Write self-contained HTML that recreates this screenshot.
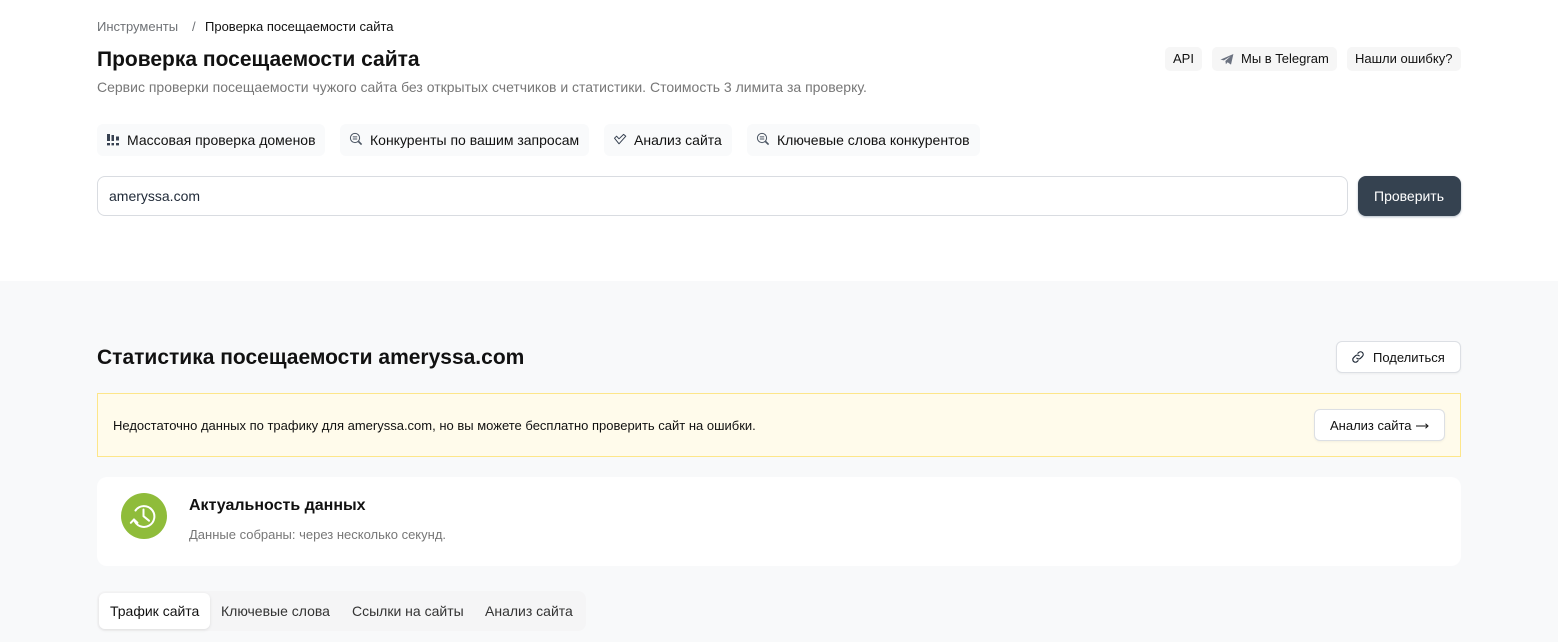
<!DOCTYPE html>
<html lang="ru">
<head>
<meta charset="utf-8">
<title>Проверка посещаемости сайта</title>
<style>
*{box-sizing:border-box}
html,body{margin:0;padding:0}
body{width:1558px;height:642px;position:relative;overflow:hidden;background:#fff;font-family:"Liberation Sans",sans-serif;color:#111;font-size:14px}
.a{position:absolute;white-space:nowrap}
.box{position:absolute;white-space:nowrap}
svg{position:absolute;display:block}
.chip{background:#f9fafb;border-radius:6px;height:32px;top:124px}
.top{background:#f6f6f6;border-radius:5px;height:24px;top:47px}
.btn{background:#fff;border:1px solid #dcdfe4;border-radius:6px;box-shadow:0 1px 2px rgba(0,0,0,.05)}
.t{line-height:20px}
.s{font-size:13px;line-height:20px}
</style>
</head>
<body>
<div class="box" style="left:0;top:281px;width:1558px;height:361px;background:#f8f9fa"></div>

<div class="a s" style="left:97px;top:17px;color:#6f7276">Инструменты</div>
<div class="a s" style="left:192px;top:17px;color:#6f7276">/</div>
<div class="a s" style="left:205px;top:17px;color:#111">Проверка посещаемости сайта</div>

<div class="a" style="left:97px;top:46px;font-size:21px;line-height:28px;font-weight:700;color:#111">Проверка посещаемости сайта</div>
<div class="a" style="left:97px;top:77px;font-size:14px;line-height:20px;color:#777">Сервис проверки посещаемости чужого сайта без открытых счетчиков и статистики. Стоимость 3 лимита за проверку.</div>

<div class="box top" style="left:1165px;width:37px"></div>
<div class="a s" style="left:1173px;top:49px">API</div>
<div class="box top" style="left:1212px;width:125px"></div>
<svg style="left:1220px;top:52px" width="14" height="14" viewBox="0 0 14 14"><path d="M.5 7.6 13.4 2 11 12.6 7.6 10.2 5.9 12.3 5.4 9 10.6 4.2 3.9 8.4Z" fill="#6b7280"/></svg>
<div class="a s" style="left:1241px;top:49px">Мы в Telegram</div>
<div class="box top" style="left:1347px;width:114px"></div>
<div class="a s" style="left:1355px;top:49px">Нашли ошибку?</div>

<div class="box chip" style="left:97px;width:228px"></div>
<svg style="left:106px;top:133px" width="14" height="14" viewBox="0 0 14 14" fill="#374151"><rect x="1" y="1" width="3" height="7"/><rect x="5.5" y="2" width="2.5" height="6"/><rect x="10" y="3.5" width="3" height="4"/><rect x="1" y="10" width="3" height="2.4"/><rect x="5.5" y="10" width="2.5" height="2.4"/><rect x="10" y="10" width="3" height="2.4"/></svg>
<div class="a t" style="left:127px;top:130px">Массовая проверка доменов</div>

<div class="box chip" style="left:340px;width:249px"></div>
<svg style="left:349px;top:132px" width="14" height="14" viewBox="0 0 14 14" fill="none" stroke="#4b5563" stroke-width="1"><circle cx="6" cy="6" r="4.6"/><path d="M3.8 4.9h4.4M3.8 7h4.4" stroke-width="1"/><path d="M9.5 9.5 12.6 12.6" stroke-width="1.6"/></svg>
<div class="a t" style="left:370px;top:130px">Конкуренты по вашим запросам</div>

<div class="box chip" style="left:604px;width:128px"></div>
<svg style="left:613px;top:132px" width="14" height="14" viewBox="0 0 14 14" fill="none" stroke="#374151" stroke-width="1"><path d="M1.5 6.2 3.6 4.2 6 6.8 10.6 2.4 12.8 4.2 6 11.8Z" stroke-linejoin="round"/></svg>
<div class="a t" style="left:634px;top:130px">Анализ сайта</div>

<div class="box chip" style="left:747px;width:233px"></div>
<svg style="left:756px;top:132px" width="14" height="14" viewBox="0 0 14 14" fill="none" stroke="#4b5563" stroke-width="1"><circle cx="6" cy="6" r="4.6"/><path d="M3.8 4.9h4.4M3.8 7h4.4" stroke-width="1"/><path d="M9.5 9.5 12.6 12.6" stroke-width="1.6"/></svg>
<div class="a t" style="left:777px;top:130px">Ключевые слова конкурентов</div>

<div class="box" style="left:97px;top:176px;width:1251px;height:40px;border:1px solid #d9dce1;border-radius:8px;background:#fff"></div>
<div class="a t" style="left:109px;top:186px;color:#1f2937">ameryssa.com</div>
<div class="box" style="left:1358px;top:176px;width:103px;height:40px;background:#354250;border-radius:8px;box-shadow:0 1px 2px rgba(31,60,90,.35)"></div>
<div class="a t" style="left:1374px;top:186px;color:#fff">Проверить</div>

<div class="a" style="left:97px;top:344px;font-size:21px;line-height:28px;font-weight:700;color:#111">Статистика посещаемости ameryssa.com</div>
<div class="box btn" style="left:1336px;top:341px;width:125px;height:32px"></div>
<svg style="left:1351px;top:350px" width="14" height="14" viewBox="0 0 24 24" fill="none" stroke="#1f2937" stroke-width="2" stroke-linecap="round" stroke-linejoin="round"><path d="M10 14a4.5 4.5 0 0 0 6.4 0l3.2-3.2a4.5 4.5 0 0 0-6.4-6.4l-1.4 1.4"/><path d="M14 10a4.5 4.5 0 0 0-6.4 0l-3.2 3.2a4.5 4.5 0 0 0 6.4 6.4l1.4-1.4"/></svg>
<div class="a s" style="left:1373px;top:348px">Поделиться</div>

<div class="box" style="left:97px;top:393px;width:1364px;height:64px;background:#fffbeb;border:1px solid #fde68a"></div>
<div class="a s" style="left:113px;top:416px">Недостаточно данных по трафику для ameryssa.com, но вы можете бесплатно проверить сайт на ошибки.</div>
<div class="box btn" style="left:1314px;top:409px;width:131px;height:32px"></div>
<div class="a s" style="left:1330px;top:416px">Анализ сайта</div>
<svg style="left:1416px;top:421px" width="13" height="10" viewBox="0 0 13 10" fill="none" stroke="#111" stroke-width="1"><path d="M0 5H12M9.5 2.8 12 5 9.5 7.2"/></svg>

<div class="box" style="left:97px;top:477px;width:1364px;height:89px;background:#fff;border-radius:10px"></div>
<svg style="left:120.5px;top:493px" width="46" height="46" viewBox="0 0 46 46" fill="none"><circle cx="23" cy="23" r="23" fill="#8fbc3a"/><path d="M14.5 17.5A10.4 10.4 0 1 1 13 26.5" stroke="#fff" stroke-width="2" stroke-linecap="round"/><path d="M22.5 16.5V23.2L28 27.7" stroke="#fff" stroke-width="2" stroke-linecap="round" stroke-linejoin="round"/><path d="M9.8 29.8 13 26.5 16.5 29.8" stroke="#fff" stroke-width="2" stroke-linecap="round" stroke-linejoin="round"/></svg>
<div class="a" style="left:189px;top:496px;font-size:16px;line-height:20px;font-weight:700;color:#111">Актуальность данных</div>
<div class="a s" style="left:189px;top:525px;color:#777">Данные собраны: через несколько секунд.</div>

<div class="box" style="left:97px;top:591px;width:489px;height:40px;background:#f5f5f6;border-radius:8px"></div>
<div class="box" style="left:99px;top:593px;width:111px;height:36px;background:#fff;border-radius:6px;box-shadow:0 1px 3px rgba(0,0,0,.1)"></div>
<div class="a t" style="left:110px;top:601px;color:#111">Трафик сайта</div>
<div class="a t" style="left:221px;top:601px;color:#333">Ключевые слова</div>
<div class="a t" style="left:352px;top:601px;color:#333">Ссылки на сайты</div>
<div class="a t" style="left:485px;top:601px;color:#333">Анализ сайта</div>
</body>
</html>
